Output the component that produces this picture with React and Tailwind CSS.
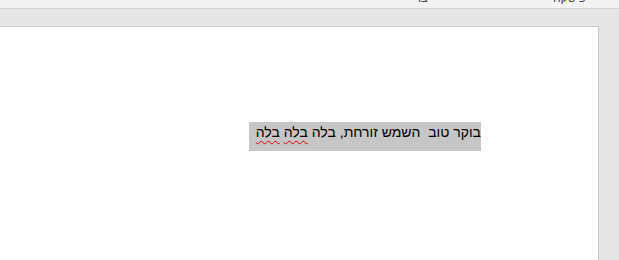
export default function App() {
    return (
        <div className="w-[619px] h-[260px] overflow-hidden bg-[#e6e6e6] flex flex-col font-['Liberation_Sans',sans-serif]">
            <div className="h-[9px] shrink-0 bg-[#f3f3f3] border-b border-[#d5d5d5] relative overflow-hidden text-[12px] text-[#444]">
                <span className="absolute left-[418px] top-[-9px] leading-[14px]" dir="rtl">צו</span>
                <span className="absolute left-[553px] top-[-9px] leading-[14px]" dir="rtl">פיסקה</span>
            </div>
            <div className="flex-1 pt-[17px]">
                <div className="w-[599px] h-full bg-white border-t border-r border-[#c6c6c6]">
                    <div dir="rtl" className="flex pt-[95px] pr-[117px]">
                        <div className="w-[232px] h-[29px] bg-[#c6c6c6] text-[14px] leading-[18px] text-black pt-[1px]">
                            בוקר טוב&nbsp; השמש זורחת, בלה{' '}
                            <span className="underline decoration-wavy decoration-[#e00000] decoration-1 underline-offset-[3px]">בלה</span>{' '}
                            <span className="underline decoration-wavy decoration-[#e00000] decoration-1 underline-offset-[3px]">בלה</span>
                        </div>
                    </div>
                </div>
            </div>
        </div>
    )
}
